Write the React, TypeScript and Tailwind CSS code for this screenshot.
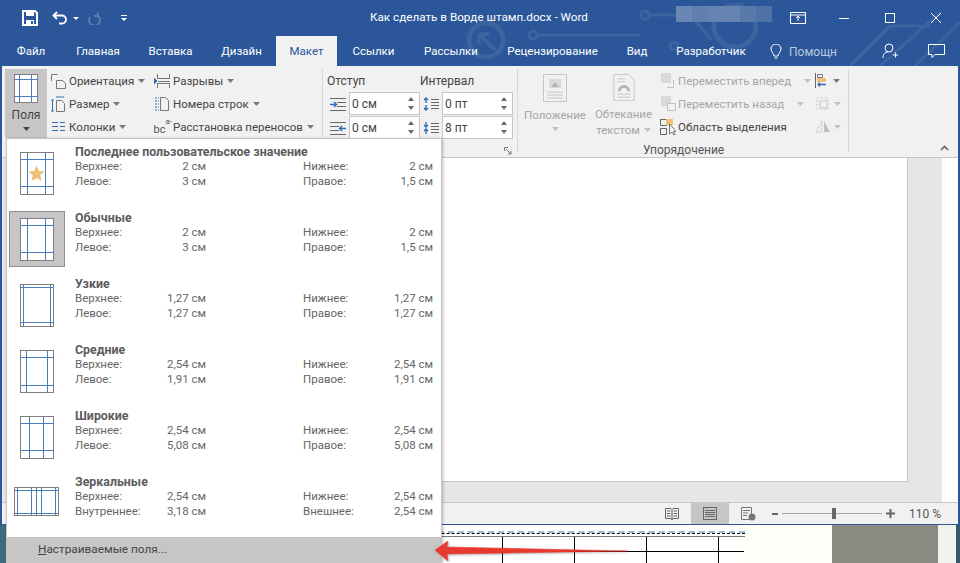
import type { ReactNode } from "react";

const tabs = [
  { label: "Файл", width: "w-[62px]" },
  { label: "Главная", width: "w-[72px]" },
  { label: "Вставка", width: "w-[73px]" },
  { label: "Дизайн", width: "w-[69px]" },
];
const tabsAfter = [
  { label: "Ссылки", width: "w-[73px]" },
  { label: "Рассылки", width: "w-[82px]" },
  { label: "Рецензирование", width: "w-[121px]" },
  { label: "Вид", width: "w-[48px]" },
  { label: "Разработчик", width: "w-[100px]" },
];

const presets = [
  { title: "Последнее пользовательское значение", a: "Верхнее:", av: "2 см", b: "Нижнее:", bv: "2 см", c: "Левое:", cv: "3 см", d: "Правое:", dv: "1,5 см", icon: { w: 33, h: 42, x1: 7, x2: 25, y1: 7, y2: 34, star: true } },
  { title: "Обычные", a: "Верхнее:", av: "2 см", b: "Нижнее:", bv: "2 см", c: "Левое:", cv: "3 см", d: "Правое:", dv: "1,5 см", selected: true, icon: { w: 33, h: 42, x1: 7, x2: 25, y1: 7, y2: 34 } },
  { title: "Узкие", a: "Верхнее:", av: "1,27 см", b: "Нижнее:", bv: "1,27 см", c: "Левое:", cv: "1,27 см", d: "Правое:", dv: "1,27 см", icon: { w: 33, h: 42, x1: 3, x2: 30, y1: 3, y2: 38 } },
  { title: "Средние", a: "Верхнее:", av: "2,54 см", b: "Нижнее:", bv: "2,54 см", c: "Левое:", cv: "1,91 см", d: "Правое:", dv: "1,91 см", icon: { w: 33, h: 42, x1: 6, x2: 27, y1: 7, y2: 35 } },
  { title: "Широкие", a: "Верхнее:", av: "2,54 см", b: "Нижнее:", bv: "2,54 см", c: "Левое:", cv: "5,08 см", d: "Правое:", dv: "5,08 см", icon: { w: 33, h: 42, x1: 9, x2: 23, y1: 7, y2: 34 } },
];

const indentRows = [
  { left: "0 см", right: "0 пт", lines: "M0 1.500h16M7 5.500h9M7 9.500h9M0 13.500h16", arrow: "M0 7.500h6M4 5l2.500 2.500L4 10", stack: "M3 1v5M1 3l2-2 2 2M3 8v5M1 11l2 2 2-2" },
  { left: "0 см", right: "8 пт", lines: "M0 1.500h16M0 5.500h9M0 9.500h9M0 13.500h16", arrow: "M16 7.500h-6M12 5l-2.500 2.500L12 10", stack: "M3 1v5M1 4l2 2 2-2M3 8v5M1 10l2-2 2 2" },
];

function PageIcon({ w, h, x1, x2, y1, y2, star }: { w: number; h: number; x1: number; x2: number; y1: number; y2: number; star?: boolean }) {
  return (
    <svg width={w + 1} height={h + 1} viewBox={`0 0 ${w + 1} ${h + 1}`} fill="none" shapeRendering="crispEdges">
      <rect x="0.5" y="0.5" width={w} height={h} fill="#fff" stroke="#7f7f7f" />
      <path d={`M${x1 + 0.5} 1V${h}M${x2 + 0.5} 1V${h}M1 ${y1 + 0.5}H${w}M1 ${y2 + 0.5}H${w}`} stroke="#4a7ebb" />
      {star && <path d="M16.500 13.500l2.400 5.400 5.600.5-4.300 3.800 1.300 5.700-5-3-5 3 1.300-5.700-4.300-3.800 5.600-.5z" fill="#edc07a" shapeRendering="auto" />}
    </svg>
  );
}

function MirrorIcon() {
  return (
    <svg width="46" height="30" viewBox="0 0 46 30" fill="none" shapeRendering="crispEdges">
      <rect x="0.5" y="0.5" width="44" height="28" fill="#fff" stroke="#7f7f7f" />
      <path d="M3.500 1V28M17.500 1V28M22.500 1V28M27.500 1V28M41.500 1V28M1 3.500H44M1 26.500H44" stroke="#4a7ebb" />
    </svg>
  );
}

function Caret({ light }: { light?: boolean }) {
  return (
    <svg width="7" height="4" viewBox="0 0 7 4" className="ml-1 shrink-0">
      <path d="M0 0h7L3.500 4z" fill={light ? "#c0c0c0" : "#7a7a7a"} />
    </svg>
  );
}

function RibbonRow({ icon, label, disabled, gap = "gap-[3px]" }: { icon: ReactNode; label: string; disabled?: boolean; gap?: string }) {
  return (
    <div className={`flex h-[23px] items-center ${gap} ${disabled ? "text-[#a6a6a6]" : "text-[#444]"}`}>
      <span className="flex w-[16px] shrink-0 justify-center">{icon}</span>
      <span className="whitespace-nowrap pt-[2px]">{label}</span>
    </div>
  );
}

function Spinner({ value }: { value: string }) {
  return (
    <div className="flex h-[23px] w-[71px] items-center justify-between border border-[#c6c6c6] bg-white pl-[2px] pr-[5px] text-[12px] text-[#444]">
      <span>{value}</span>
      <span className="flex flex-col gap-[5px]">
        <svg width="6" height="4" viewBox="0 0 6 4"><path d="M0 4h6L3 0z" fill="#666" /></svg>
        <svg width="6" height="4" viewBox="0 0 6 4"><path d="M0 0h6L3 4z" fill="#666" /></svg>
      </span>
    </div>
  );
}

function PresetRow({ preset }: { preset: (typeof presets)[number] }) {
  return (
    <div className="flex h-[66px]">
      <div className="flex h-[62px] w-[68px] shrink-0 items-center pl-[2px]">
        <div className={`flex h-[56px] w-[56px] items-center justify-center ${preset.selected ? "border border-[#8e8e8e] bg-[#c6c6c6]" : ""}`}>
          <PageIcon {...preset.icon} />
        </div>
      </div>
      <PresetText title={preset.title} a={preset.a} av={preset.av} b={preset.b} bv={preset.bv} c={preset.c} cv={preset.cv} d={preset.d} dv={preset.dv} />
    </div>
  );
}

function PresetText(p: { title: string; a: string; av: string; b: string; bv: string; c: string; cv: string; d: string; dv: string }) {
  return (
    <div className="flex w-[358px] flex-col pt-[2px] text-[#666]">
      <div className="h-[15px] whitespace-nowrap text-[12.4px] font-bold leading-[15px] text-[#5c5c5c]">{p.title}</div>
      {[[p.a, p.av, p.b, p.bv], [p.c, p.cv, p.d, p.dv]].map((row) => (
        <div key={row[0]} className="grid h-[15px] grid-cols-[131px_97px_130px] leading-[15px]">
          <div className="flex justify-between"><span>{row[0]}</span><span>{row[1]}</span></div>
          <span />
          <div className="flex justify-between"><span>{row[2]}</span><span>{row[3]}</span></div>
        </div>
      ))}
    </div>
  );
}

function TitleDecor() {
  return (
    <svg className="absolute left-0 top-0" width="960" height="66" viewBox="0 0 960 66" fill="none" stroke="#3a659f" strokeWidth="3">
      <circle cx="486" cy="40" r="17" strokeWidth="5" />
      <path d="M479 34l16 16M479 34v10M479 34h10" strokeWidth="4" />
      <circle cx="533" cy="35" r="4" />
      <path d="M537 35H640" />
      <circle cx="645" cy="15" r="4" />
      <path d="M649 15H690L712 40" />
      <circle cx="674" cy="46" r="4" />
      <circle cx="735" cy="26" r="21" strokeWidth="5" />
      <path d="M850 66L890 26H930M880 66L940 12M915 66L960 22" />
    </svg>
  );
}

export default function App() {
  return (
    <div className="relative h-[563px] w-[960px] overflow-hidden bg-white [font-family:Roboto,sans-serif] text-[11.5px]">
      <div className="flex h-[525px] flex-col border-x-2 border-b border-[#2b579a]">
        {/* title bar and tabs */}
        <div className="relative -mx-[2px] h-[66px] bg-[#2b579a] text-white">
          <TitleDecor />
          <div className="relative flex h-[36px] items-center">
            <div className="flex w-[130px] items-center pl-[22px]">
              <svg width="16" height="16" viewBox="0 0 16 16" fill="none"><path d="M1 1h12l2 2v12H1z" stroke="#fff" strokeWidth="2" /><path d="M4 1h8v5H4zM4 10h8v5H4z" fill="#fff" /><path d="M9 11h2v3H9z" fill="#2b579a" /></svg>
              <svg className="ml-[14px]" width="16" height="14" viewBox="0 0 16 14" fill="none"><path d="M5 1L1.500 4.500 5 8M2 4.500h8a4 4 0 0 1 0 8H7" stroke="#fff" strokeWidth="1.800" /></svg>
              <svg className="ml-[5px]" width="6" height="3" viewBox="0 0 6 3"><path d="M0 0h6L3 3z" fill="#fff" /></svg>
              <svg className="ml-[9px]" width="14" height="14" viewBox="0 0 14 14" fill="none"><path d="M10 1v4H6M9.500 4.500A5.500 5.500 0 1 1 2 6" stroke="#5d80b3" strokeWidth="1.800" /></svg>
              <svg className="ml-[19px]" width="6" height="6" viewBox="0 0 6 6"><path d="M0 0h6v1H0zM0 3h6L3 6z" fill="#fff" /></svg>
            </div>
            <span className="absolute left-[370px] whitespace-nowrap text-[11.7px]">Как сделать в Ворде штамп.docx - Word</span>
            <div className="absolute left-[676px] top-[6px] flex h-[16px] w-[96px]">
              <div className="w-[16px] bg-[#6a87b4]" />
              <div className="w-[16px] bg-[#5f7fae]" />
              <div className="w-[32px] bg-[#6684b2]" />
              <div className="w-[16px] bg-[#5879aa]" />
              <div className="w-[16px] bg-[#4f72a5]" />
            </div>
            <div className="ml-auto flex items-center pr-[19px]">
              <svg width="16" height="12" viewBox="0 0 16 12" fill="none"><path d="M.5.500h15v11H.5zM.5 3h15" stroke="#fff" /><path d="M8 4v5M6 6l2-2 2 2" stroke="#fff" /></svg>
              <div className="ml-[33px] h-px w-[10px] bg-white" />
              <div className="ml-[36px] h-[10px] w-[10px] border border-white" />
              <svg className="ml-[36px]" width="10" height="10" viewBox="0 0 10 10"><path d="M0 0l10 10M10 0L0 10" stroke="#fff" /></svg>
            </div>
          </div>
          <div className="relative flex h-[30px]">
            {tabs.map((t) => (
              <div key={t.label} className={`flex items-center justify-center pt-[2px] ${t.width}`}>{t.label}</div>
            ))}
            <div className="flex w-[61px] items-center justify-center bg-[#f1f1f1] pt-[2px] text-[#2b579a]">Макет</div>
            {tabsAfter.map((t) => (
              <div key={t.label} className={`flex items-center justify-center pt-[2px] ${t.width}`}>{t.label}</div>
            ))}
            <div className="ml-[9px] flex items-center gap-[7px] pt-[2px] text-[12px] text-[#b9c9df]">
              <svg width="12" height="16" viewBox="0 0 12 16" fill="none"><path d="M4 12c0-3-3-4-3-7a5 5 0 0 1 10 0c0 3-3 4-3 7zM4.500 14h3" stroke="#fff" /></svg>
              <span>Помощн</span>
            </div>
            <div className="ml-auto flex items-center pr-[15px]">
              <svg width="16" height="16" viewBox="0 0 16 16" fill="none"><circle cx="7" cy="5" r="4" stroke="#fff" /><path d="M1 15c0-4 2-6 5-6M11 12h5M13.500 9.500v5" stroke="#fff" /></svg>
              <svg className="ml-[30px]" width="17" height="15" viewBox="0 0 17 15" fill="none"><path d="M.5.500h16v10H7l-3 3v-3H.5z" stroke="#fff" /></svg>
            </div>
          </div>
        </div>

        {/* ribbon */}
        <div className="flex h-[92px] shrink-0 border-b border-[#c6c6c6] bg-[#f1f1f1] pt-[3px]">
          <div className="ml-[3px] flex h-[69px] w-[42px] flex-col items-center bg-[#c6c6c6] pt-[5px] text-[#444]">
            <PageIcon w={23} h={28} x1={5} x2={17} y1={5} y2={22} />
            <span className="mt-[4px] text-[12px] leading-[16px]">Поля</span>
            <svg className="mt-[4px]" width="7" height="4" viewBox="0 0 7 4"><path d="M0 0h7L3.500 4z" fill="#444" /></svg>
          </div>
          <div className="ml-[3px] flex w-[104px] flex-col">
            <div className="flex items-center"><RibbonRow label="Ориентация" icon={<svg width="16" height="16" viewBox="0 0 16 16" fill="none"><path d="M1.500 8V1.500h6M6.500 7.500h6l3 3v5h-9z" stroke="#777" /></svg>} /><Caret /></div>
            <div className="flex items-center"><RibbonRow label="Размер" icon={<svg width="16" height="16" viewBox="0 0 16 16" fill="none"><path d="M2.500 4v11M1 4h3M1 15h3M6 1h8" stroke="#2f6db5" /><path d="M6.500 4.500h5l3 3v8h-8z" stroke="#777" /></svg>} /><Caret /></div>
            <div className="flex items-center"><RibbonRow label="Колонки" icon={<svg width="13" height="11" viewBox="0 0 13 11" fill="none" shapeRendering="crispEdges"><path d="M0 1.500h5.500M7.500 1.500h5.500M0 5.500h5.500M7.500 5.500h5.500M0 9.500h5.500M7.500 9.500h5.500" stroke="#2f6db5" /></svg>} /><Caret /></div>
          </div>
          <div className="flex w-[168px] flex-col">
            <div className="flex items-center"><RibbonRow label="Разрывы" icon={<svg width="16" height="16" viewBox="0 0 16 16" fill="none" shapeRendering="crispEdges"><path d="M3.500 1v4.500h12V1M3.500 15v-4.500h12V15M4 8h12" stroke="#777" /><path d="M0 5l3 3-3 3z" fill="#2f6db5" /></svg>} /><Caret /></div>
            <div className="flex items-center"><RibbonRow label="Номера строк" icon={<svg width="16" height="16" viewBox="0 0 16 16" fill="none"><path d="M1 2h4M1 5h4M1 8h4M1 11h4M1 14h4" stroke="#2f6db5" strokeDasharray="2 1" /><path d="M6.500 1.500h5l3 3v10h-8z" stroke="#777" /></svg>} /><Caret /></div>
            <div className="flex items-center"><RibbonRow label="Расстановка переносов" icon={<span className="flex w-[17px] items-start text-[#555]"><span className="mt-[6px] text-[11px] leading-[11px]">bc</span><span className="text-[8px] leading-[8px]">a-</span></span>} /><Caret /></div>
          </div>
          <div className="h-[84px] w-px bg-[#d8d8d8]" />
          <div className="flex w-[194px] flex-col pl-[4px] pr-[4px]">
            <div className="flex h-[23px] items-center text-[12px] text-[#444]">
              <span className="w-[93px]">Отступ</span>
              <span>Интервал</span>
            </div>
            {indentRows.map((row) => (
              <div key={row.right} className="mb-[1px] flex h-[23px] items-center">
                <span className="flex w-[22px] justify-end pr-[3px]">
                  <svg width="16" height="14" viewBox="0 0 16 14" fill="none">
                    <path d={row.lines} stroke="#666" shapeRendering="crispEdges" />
                    <path d={row.arrow} stroke="#2f6db5" strokeWidth="1.500" />
                  </svg>
                </span>
                <Spinner value={row.left} />
                <span className="flex w-[22px] justify-center">
                  <svg width="16" height="14" viewBox="0 0 16 14" fill="none">
                    <path d="M8 2.500h8M8 5.500h8M8 8.500h8M8 11.500h8" stroke="#666" shapeRendering="crispEdges" />
                    <path d={row.stack} stroke="#2f6db5" strokeWidth="1.400" />
                  </svg>
                </span>
                <Spinner value={row.right} />
              </div>
            ))}
            <div className="flex flex-1 items-end justify-end pb-[2px] pr-[1px]">
              <svg width="8" height="8" viewBox="0 0 8 8" fill="none"><path d="M.5 4V.5H4M2 2l5 5M4 7h3V4" stroke="#777" /></svg>
            </div>
          </div>
          <div className="h-[84px] w-px bg-[#d8d8d8]" />
          <div className="flex w-[330px] flex-col">
            <div className="flex h-[69px] text-[#a6a6a6]">
              <div className="ml-[4px] flex w-[66px] flex-col items-center pt-[5px]">
                <svg width="24" height="28" viewBox="0 0 24 28" fill="none"><path d="M.5.500h23v27H.5z" stroke="#c6c6c6" /><path d="M6 5h12v9H6z" fill="#d9d9d9" /><path d="M8 13l4-5 4 5z" fill="#b5b5b5" /><path d="M4 18h16M4 21h16M4 24h16" stroke="#c6c6c6" /></svg>
                <span className="mt-[5px] leading-[16px]">Положение</span>
                <svg className="mt-[4px]" width="7" height="4" viewBox="0 0 7 4"><path d="M0 0h7L3.500 4z" fill="#c0c0c0" /></svg>
              </div>
              <div className="ml-[4px] flex w-[63px] flex-col items-center pt-[5px]">
                <svg width="22" height="28" viewBox="0 0 22 28" fill="none"><path d="M.5.500h15l6 6v21H.5z" stroke="#c6c6c6" /><path d="M4 5h8M4 8h8M4 21h14M4 24h14" stroke="#c6c6c6" /><path d="M6 18a5 5 0 0 1 10 0" stroke="#b5b5b5" strokeWidth="3" /></svg>
                <span className="mt-[5px] leading-[16px]">Обтекание</span>
                <span className="flex items-center leading-[16px]">текстом<Caret light /></span>
              </div>
              <div className="ml-[5px] flex w-[155px] flex-col">
                <div className="flex items-center"><RibbonRow disabled gap="gap-[2px]" label="Переместить вперед" icon={<svg width="15" height="15" viewBox="0 0 15 15" fill="none"><path d="M0 0h10v10H0z" fill="#d9d9d9" /><path d="M12.500 7v7.500H6" stroke="#c0c0c0" /></svg>} /><span className="ml-[9px]"><Caret light /></span></div>
                <div className="flex items-center"><RibbonRow disabled gap="gap-[2px]" label="Переместить назад" icon={<svg width="15" height="15" viewBox="0 0 15 15" fill="none"><path d="M0 0h10v10H0z" fill="#d9d9d9" /><path d="M6.500 7.500h8v7h-8z" fill="#f1f1f1" stroke="#c0c0c0" /></svg>} /><span className="ml-[9px]"><Caret light /></span></div>
                <RibbonRow gap="gap-[2px]" label="Область выделения" icon={<svg width="16" height="16" viewBox="0 0 16 16" fill="none"><path d="M.5.500h6v6h-6zM.500 9.500h6v6h-6z" stroke="#666" /><path d="M6 0h7v6H6z" fill="#edc07a" /><path d="M9.500 5v10l2.500-2 2 3 1-.5-1.500-3H16z" fill="#fff" stroke="#555" strokeWidth=".8" /></svg>} />
              </div>
              <div className="flex w-[33px] flex-col">
                <div className="flex h-[23px] items-center"><svg width="12" height="15" viewBox="0 0 12 15" fill="none"><path d="M.5 0v15" stroke="#666" /><path d="M2.500 1.500h5v3h-5z" stroke="#777" /><path d="M2 5h9v4H2z" fill="#edc07a" /><path d="M11 11.500H3M5 9.500l-2 2 2 2" stroke="#2f6db5" strokeWidth="1.300" /></svg><span className="ml-[2px]"><Caret /></span></div>
                <div className="flex h-[23px] items-center"><svg width="15" height="15" viewBox="0 0 15 15" fill="none"><path d="M2 2h11v11H2z" stroke="#c6c6c6" strokeDasharray="2 2" /><path d="M5 5h7v7H5z" stroke="#c6c6c6" /></svg><Caret light /></div>
                <div className="flex h-[23px] items-center"><svg width="15" height="13" viewBox="0 0 15 13" fill="none"><path d="M7 1L1 12h6z" stroke="#c6c6c6" strokeDasharray="2 1" /><path d="M9 1l6 11H9z" fill="#c0c0c0" /></svg><Caret light /></div>
              </div>
            </div>
            <div className="pl-[125px] pt-[3px] text-[12px] text-[#555]">Упорядочение</div>
          </div>
          <div className="h-[84px] w-px bg-[#d8d8d8]" />
          <div className="flex flex-1 items-end justify-end pb-[6px] pr-[9px]">
            <svg width="9" height="6" viewBox="0 0 9 6" fill="none"><path d="M1 5l3.500-3.500L8 5" stroke="#666" strokeWidth="1.600" /></svg>
          </div>
        </div>

        {/* document */}
        <div className="flex min-h-0 flex-1">
          <div className="flex-1 bg-[#e6e6e6] pb-[20px] pl-[100px] pr-[34px]">
            <div className="h-full border-b border-r border-[#c6c6c6] bg-white" />
          </div>
          <div className="w-[16px] bg-white" />
        </div>

        {/* status bar */}
        <div className="flex h-[22px] shrink-0 items-center border-t border-[#c6c6c6] bg-[#f1f1f1] pl-[663px] text-[#555]">
          <svg width="14" height="14" viewBox="0 0 14 14" fill="none"><path d="M.5 1.500h5.500l1 1 1-1h5.500v10H8l-1 1.500-1-1.500H.5zM7 2.500v10M2 4h3.500M2 6.500h3.500M2 9h3.500M8.500 4H12M8.500 6.500H12M8.500 9H12" stroke="#666" /></svg>
          <div className="ml-[12px] flex h-[21px] w-[38px] items-center justify-center bg-[#c6c6c6]">
            <svg width="14" height="13" viewBox="0 0 14 13" fill="none" shapeRendering="crispEdges"><path d="M.5.500h13v12H.5zM2 3.500h10M2 5.500h10M2 7.500h10M2 9.500h10" stroke="#666" /></svg>
          </div>
          <svg className="ml-[12px]" width="15" height="14" viewBox="0 0 15 14" fill="none"><path d="M.5.500h10v12H.5zM2 3.500h7M2 6h5M2 8.500h4" stroke="#777" /><circle cx="11" cy="10" r="3.500" fill="#777" /></svg>
          <div className="ml-[16px] h-[2px] w-[6px] bg-[#666]" />
          <div className="relative ml-[4px] h-px w-[100px] bg-[#a6a6a6]">
            <div className="absolute left-[50px] -top-[5px] h-[11px] w-[4px] bg-[#666]" />
          </div>
          <svg className="ml-[4px]" width="9" height="9" viewBox="0 0 9 9"><path d="M3.500 0h2v3.500H9v2H5.500V9h-2V5.500H0v-2h3.500z" fill="#666" /></svg>
          <span className="ml-[14px] text-[12px]">110 %</span>
        </div>
      </div>

      {/* window behind */}
      <div className="flex h-[38px]">
        <div className="w-[6px] bg-[#3d6a7c]" />
        <div className="flex w-[739px] flex-col pt-[6px]">
          <div className="border-t-2 border-dashed border-[#9db8d8]" />
          <div className="border-t border-dashed border-black" />
          <div className="mt-[2px] border-t border-[#777]" />
          <div className="flex flex-1 pl-[496px]">
            {[0, 1, 2].map((i) => (
              <div key={i} className="h-full w-[72px] border-l border-black">
                <div className="h-[15px] border-b border-black" />
              </div>
            ))}
            <div className="h-full w-[26px] border-l border-black">
              <div className="h-[15px] border-b border-black" />
            </div>
          </div>
        </div>
        <div className="w-[87px] bg-[#fefef9]" />
        <div className="w-[106px] bg-[#878b80]" />
        <div className="w-[18px] bg-[#f1f1ee]" />
        <div className="w-[4px] bg-[#35596a]" />
      </div>

      {/* dropdown over the ribbon */}
      <div className="absolute left-[6px] top-[138px] h-[425px] w-[436px] border border-[#c6c6c6] bg-white shadow-[1px_1px_3px_rgba(0,0,0,0.25)]">
        <div className="pt-[3px]">
          {presets.map((p) => (
            <PresetRow key={p.title} preset={p} />
          ))}
          <div className="flex h-[65px]">
            <div className="flex h-[60px] w-[68px] shrink-0 items-center pl-[7px]"><MirrorIcon /></div>
            <PresetText title="Зеркальные" a="Верхнее:" av="2,54 см" b="Нижнее:" bv="2,54 см" c="Внутреннее:" cv="3,18 см" d="Внешнее:" dv="2,54 см" />
          </div>
        </div>
        <div className="h-[26px] bg-[#c6c6c6] pl-[31px] text-[11.8px] leading-[25px] text-[#444]">
          <span className="underline">Н</span>астраиваемые поля...
        </div>
      </div>

      {/* annotation arrow */}
      <svg className="absolute left-[433px] top-[538px] drop-shadow-[1px_1px_1px_rgba(0,0,0,0.3)]" width="196" height="24" viewBox="0 0 196 24">
        <path d="M2 12L15 3l-1 6 180 4-180 3 1 7z" fill="#e8392f" stroke="#e8392f" strokeWidth=".5" />
      </svg>
    </div>
  );
}
